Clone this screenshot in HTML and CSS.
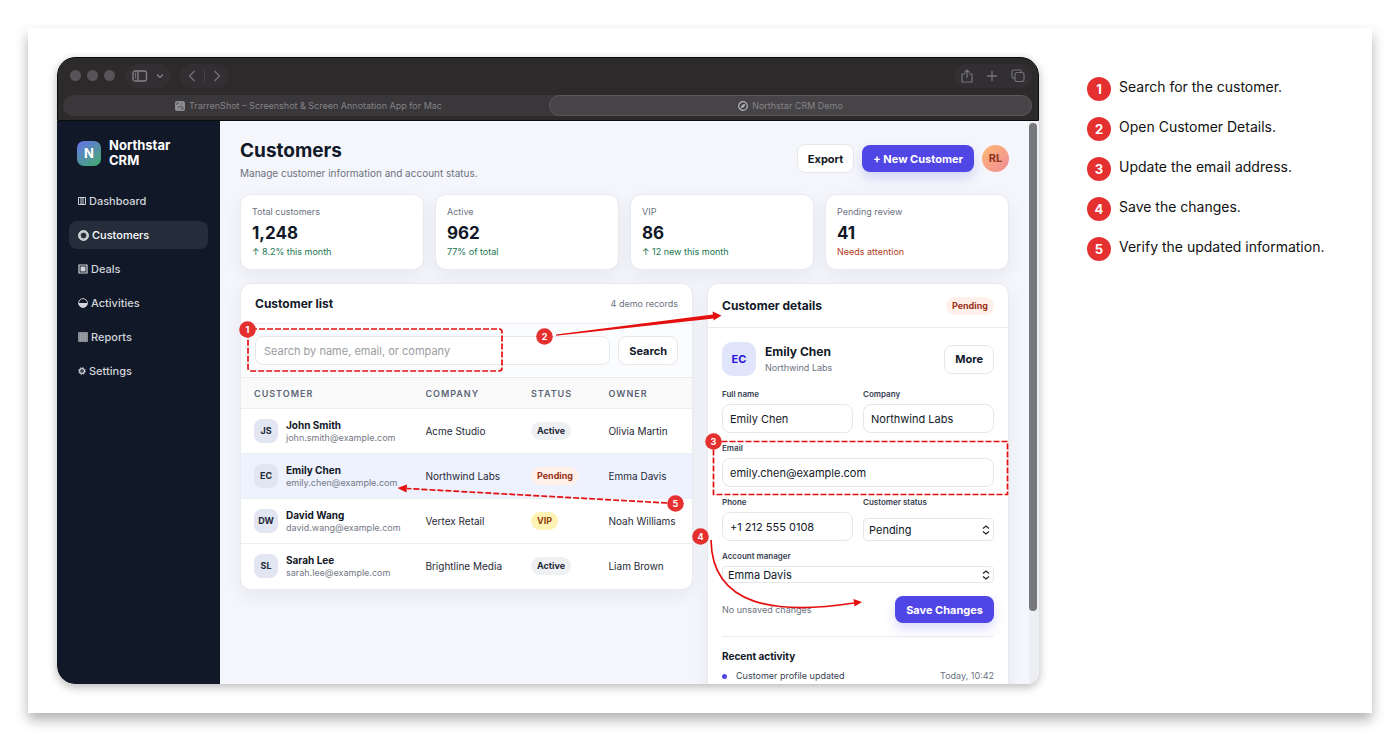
FILE: index.html
```html
<!DOCTYPE html>
<html lang="en">
<head>
  <meta charset="UTF-8">
  <title>Northstar CRM Demo</title>
  <link rel="stylesheet" href="styles.css">
</head>
<body>
  <div class="sheet">
    <div class="window">
      <!-- Browser chrome -->
      <div class="chrome">
        <div class="toolbar">
          <div class="lights"><span></span><span></span><span></span></div>
          <div class="pill">
            <svg width="16" height="12" viewBox="0 0 16 12" fill="none" stroke="#848285" stroke-width="1.3"><rect x="1" y="1" width="13.5" height="10" rx="2"/><path d="M6 1v10M3 3.5h1.2M3 5.5h1.2M3 7.5h1.2"/></svg>
            <svg width="8" height="6" viewBox="0 0 8 6" fill="none" stroke="#848285" stroke-width="1.2"><path d="M1 1.5l3 3 3-3"/></svg>
          </div>
          <div class="pill nav-pill">
            <svg width="8" height="12" viewBox="0 0 8 12" fill="none" stroke="#757376" stroke-width="1.2"><path d="M6.5 1L1.5 6l5 5"/></svg>
            <span class="pill-line"></span>
            <svg width="8" height="12" viewBox="0 0 8 12" fill="none" stroke="#757376" stroke-width="1.2"><path d="M1.5 1l5 5-5 5"/></svg>
          </div>
          <div class="pill actions-pill">
            <svg width="12" height="14" viewBox="0 0 12 14" fill="none" stroke="#757376" stroke-width="1.2"><path d="M4 5H1v8h10V5H8M6 9V1M3.5 3.5L6 1l2.500 2.500"/></svg>
            <svg width="12" height="12" viewBox="0 0 12 12" fill="none" stroke="#757376" stroke-width="1.3"><path d="M6 1v10M1 6h10"/></svg>
            <svg width="14" height="13" viewBox="0 0 14 13" fill="none" stroke="#757376" stroke-width="1.2"><rect x="4" y="3.500" width="9" height="9" rx="2"/><path d="M4 9.500H3a2 2 0 0 1-2-2V3a2 2 0 0 1 2-2h5.500a2 2 0 0 1 2 2v.5"/></svg>
          </div>
        </div>
        <div class="tabs">
          <div class="tab">
            <svg width="10" height="10" viewBox="0 0 10 10"><rect width="10" height="10" rx="2" fill="#8d8c8f"/><path d="M2 4V2h2M8 6v2H6M3 7l2-2 2 1M6 3h1" fill="none" stroke="#555357"/></svg>
            TrarrenShot – Screenshot &amp; Screen Annotation App for Mac
          </div>
          <div class="tab active">
            <svg width="10" height="10" viewBox="0 0 10 10"><circle cx="5" cy="5" r="4.300" fill="none" stroke="#b5b4b7" stroke-width="1.2"/><path d="M7.500 2.500L6 6 2.500 7.500 4 4z" fill="#b5b4b7"/></svg>
            Northstar CRM Demo
          </div>
        </div>
      </div>

      <div class="app">
        <aside class="sidebar">
          <div class="brand">
            <div class="brand-mark">N</div>
            <div>Northstar<br>CRM</div>
          </div>
          <nav>
            <a href="#"><svg width="8" height="8" viewBox="0 0 8 8" fill="none" stroke="currentColor"><path d="M.5.5h7v7h-7zM3 .5v7M5 .5v7"/></svg>Dashboard</a>
            <a href="#" class="selected"><svg width="11" height="11" viewBox="0 0 11 11" fill="none" stroke="currentColor"><circle cx="5.500" cy="5.500" r="3.900" stroke-width="2.400" stroke="#b9bdc4"/><circle cx="5.500" cy="5.500" r="4.900" stroke-width=".8"/></svg>Customers</a>
            <a href="#"><svg width="10" height="10" viewBox="0 0 10 10" fill="currentColor"><path d="M1 1h8v8H1z" fill="none" stroke="currentColor" stroke-width="1.200"/><path d="M2.500 2.500h5v5h-5z"/></svg>Deals</a>
            <a href="#"><svg width="10" height="10" viewBox="0 0 10 10" fill="currentColor"><circle cx="5" cy="5" r="4.400" fill="none" stroke="currentColor" stroke-width=".9"/><path d="M.5 5h9a4.500 4.500 0 0 1-9 0z"/></svg>Activities</a>
            <a href="#"><svg width="10" height="10" viewBox="0 0 10 10" fill="none" stroke="#aeb2b8" stroke-width=".6"><path d="M.5.5h9v9h-9z" fill="#7d828a"/><path d="M2.700.5v9M5 .5v9M7.300.5v9M.5 2.700h9M.5 5h9M.5 7.300h9"/></svg>Reports</a>
            <a href="#"><svg width="8" height="8" viewBox="0 0 8 8" fill="none" stroke="currentColor"><circle cx="4" cy="4" r="2.400" stroke-width="1.200"/><circle cx="4" cy="4" r="3.400" stroke-dasharray="1.300 1.370"/><circle cx="4" cy="4" r=".6" fill="currentColor" stroke="none"/></svg>Settings</a>
          </nav>
        </aside>

        <main>
          <header class="page-head">
            <div>
              <h1>Customers</h1>
              <p>Manage customer information and account status.</p>
            </div>
            <div class="head-actions">
              <button type="button" class="btn">Export</button>
              <button type="button" class="btn primary">+ New Customer</button>
              <div class="user">RL</div>
            </div>
          </header>

          <section class="stats">
            <div class="card stat">
              <span>Total customers</span><strong>1,248</strong><small>↑ 8.2% this month</small>
            </div>
            <div class="card stat">
              <span>Active</span><strong>962</strong><small>77% of total</small>
            </div>
            <div class="card stat">
              <span>VIP</span><strong>86</strong><small>↑ 12 new this month</small>
            </div>
            <div class="card stat">
              <span>Pending review</span><strong>41</strong><small class="warn">Needs attention</small>
            </div>
          </section>

          <div class="columns">
            <section class="card list">
              <div class="list-head">
                <h2>Customer list</h2>
                <span>4 demo records</span>
              </div>
              <form class="search">
                <input type="text" aria-label="Search customers" placeholder="Search by name, email, or company">
                <button type="button" class="btn">Search</button>
              </form>
              <table>
                <thead>
                  <tr><th class="col-customer">Customer</th><th class="col-company">Company</th><th class="col-status">Status</th><th>Owner</th></tr>
                </thead>
                <tbody>
                  <tr>
                    <td><div class="person"><div class="initials">JS</div><div><b>John Smith</b><small>john.smith@example.com</small></div></div></td>
                    <td>Acme Studio</td><td><span class="badge">Active</span></td><td>Olivia Martin</td>
                  </tr>
                  <tr class="current">
                    <td><div class="person"><div class="initials">EC</div><div><b>Emily Chen</b><small>emily.chen@example.com</small></div></div></td>
                    <td>Northwind Labs</td><td><span class="badge pending">Pending</span></td><td>Emma Davis</td>
                  </tr>
                  <tr>
                    <td><div class="person"><div class="initials">DW</div><div><b>David Wang</b><small>david.wang@example.com</small></div></div></td>
                    <td>Vertex Retail</td><td><span class="badge vip">VIP</span></td><td>Noah Williams</td>
                  </tr>
                  <tr>
                    <td><div class="person"><div class="initials">SL</div><div><b>Sarah Lee</b><small>sarah.lee@example.com</small></div></div></td>
                    <td>Brightline Media</td><td><span class="badge">Active</span></td><td>Liam Brown</td>
                  </tr>
                </tbody>
              </table>
            </section>

            <section class="card details">
              <div class="details-head">
                <h2>Customer details</h2>
                <span class="badge pending">Pending</span>
              </div>
              <div class="details-body">
                <div class="profile">
                  <div class="profile-mark">EC</div>
                  <div class="profile-name"><b>Emily Chen</b><small>Northwind Labs</small></div>
                  <button type="button" class="btn">More</button>
                </div>
                <form class="fields">
                  <div class="field">
                    <label for="fullName">Full name</label>
                    <input type="text" id="fullName" value="Emily Chen">
                  </div>
                  <div class="field">
                    <label for="company">Company</label>
                    <input type="text" id="company" value="Northwind Labs">
                  </div>
                  <div class="field wide">
                    <label for="email">Email</label>
                    <input type="email" id="email" value="emily.chen@example.com">
                  </div>
                  <div class="field">
                    <label for="phone">Phone</label>
                    <input type="text" id="phone" value="+1 212 555 0108">
                  </div>
                  <div class="field">
                    <label for="status">Customer status</label>
                    <div class="select">
                      <select id="status"><option>Pending</option><option>Active</option><option>VIP</option></select>
                      <svg width="8" height="10" viewBox="0 0 8 10" fill="none" stroke="#222" stroke-width="1.200"><path d="M1 3.500L4 1l3 2.500M1 6.500L4 9l3-2.500"/></svg>
                    </div>
                  </div>
                  <div class="field wide">
                    <label for="manager">Account manager</label>
                    <div class="select slim">
                      <select id="manager"><option>Emma Davis</option><option>Olivia Martin</option></select>
                      <svg width="8" height="10" viewBox="0 0 8 10" fill="none" stroke="#222" stroke-width="1.200"><path d="M1 3.500L4 1l3 2.500M1 6.500L4 9l3-2.500"/></svg>
                    </div>
                  </div>
                </form>
                <div class="save-row">
                  <span>No unsaved changes</span>
                  <button type="button" class="btn primary">Save Changes</button>
                </div>
                <div class="activity">
                  <h3>Recent activity</h3>
                  <div class="activity-row"><i></i><span>Customer profile updated</span><time>Today, 10:42</time></div>
                </div>
              </div>
            </section>
          </div>
        </main>
        <div class="scrollbar"><div class="thumb"></div></div>
      </div>

      <!-- Step annotations drawn over the app -->
      <svg class="marks">
        <g class="dashed">
          <rect x="191" y="272" width="254" height="42" rx="3"/>
          <rect x="656.500" y="384.500" width="294" height="53"/>
          <path d="M610 446L350 431.500"/>
        </g>
        <path class="solid" d="M499 277.500L656 257.500 655.500 254.500 664.500 258.500 656.500 263.500 656.500 261.500 499 278.800z"/>
        <path class="curve" d="M654 483C655 550 720 558 797 546"/>
        <path class="solid" d="M805 545l-8.500-3 1 7.500z"/>
        <path class="solid" d="M340.500 431l9.500-3.500-.5 8z"/>
        <g class="nums">
          <circle cx="190.500" cy="272.500" r="8.300"/><text x="190.500" y="276">1</text>
          <circle cx="487.500" cy="279.500" r="8.300"/><text x="487.500" y="283">2</text>
          <circle cx="656.500" cy="384.500" r="8.300"/><text x="656.500" y="388">3</text>
          <circle cx="643.500" cy="479.500" r="8.300"/><text x="643.500" y="483">4</text>
          <circle cx="618.500" cy="446.500" r="8.300"/><text x="618.500" y="450">5</text>
        </g>
      </svg>
    </div>

    <ol class="steps">
      <li><span>1</span>Search for the customer.</li>
      <li><span>2</span>Open Customer Details.</li>
      <li><span>3</span>Update the email address.</li>
      <li><span>4</span>Save the changes.</li>
      <li><span>5</span>Verify the updated information.</li>
    </ol>
  </div>
</body>
</html>
```
FILE: styles.css
```css
* {
  box-sizing: border-box;
}
body {
  margin: 0;
  height: 100vh;
  padding: 28px;
  background: #fff;
  font-family: Inter, "Liberation Sans", sans-serif;
  color: #111827;
}
h1, h2, h3, p {
  margin: 0;
}
button, input, select {
  font-family: inherit;
  color: inherit;
}
.sheet {
  height: 100%;
  padding: 29px;
  display: flex;
  gap: 48px;
  background: #fff;
  box-shadow: 0 7px 12px rgba(0,0,0,0.3);
}
.window {
  position: relative;
  flex: 1;
  min-width: 0;
  display: flex;
  flex-direction: column;
  overflow: hidden;
  border-radius: 18px 18px 12px 18px;
  box-shadow: 0 3px 10px rgba(0,0,0,0.28);
}

/* browser chrome */
.chrome {
  background: #2c2a2b;
  border: 1px solid #0c0c0c;
  border-radius: 18px 18px 0 0;
  padding: 5px 6px 4px 5px;
}
.toolbar {
  display: flex;
  align-items: center;
  height: 25px;
  margin-bottom: 7px;
  padding-left: 7px;
}
.lights {
  display: flex;
  gap: 6px;
  margin-right: 10px;
}
.lights span {
  width: 11px;
  height: 11px;
  border-radius: 50%;
  background: #565456;
}
.pill {
  display: flex;
  align-items: center;
  gap: 8px;
  height: 24px;
  padding: 0 7px;
  margin-right: 9px;
  border-radius: 12px;
  background: #312f31;
}
.nav-pill {
  padding: 0 8px;
}
.pill-line {
  width: 1px;
  height: 14px;
  background: #454345;
}
.actions-pill {
  gap: 13px;
  margin-left: auto;
  margin-right: 0;
}
.tabs {
  display: flex;
  height: 21px;
  padding-left: 5px;
  border-radius: 11px;
  background: #39373a;
}
.tab {
  flex: 1;
  display: flex;
  align-items: center;
  justify-content: center;
  gap: 4px;
  font-size: 9px;
  color: #858387;
}
.tab.active {
  border: 1px solid #5b595c;
  border-radius: 11px;
  background: #464447;
}

.app {
  flex: 1;
  min-height: 0;
  display: flex;
  background: #f5f6fb;
}

/* sidebar */
.sidebar {
  width: 163px;
  flex-shrink: 0;
  padding: 17px 12px;
  background: #111827;
  border-radius: 0 0 0 18px;
}
.brand {
  display: flex;
  align-items: center;
  gap: 8px;
  padding: 0 8px;
  margin-bottom: 19px;
  color: #fff;
  font-size: 13px;
  font-weight: 700;
  line-height: 15px;
}
.brand-mark {
  width: 24px;
  height: 25px;
  line-height: 25px;
  text-align: center;
  border-radius: 7px;
  background: linear-gradient(145deg, #6672ee, #42ad69);
}
nav {
  display: flex;
  flex-direction: column;
  gap: 6px;
}
nav a {
  display: flex;
  align-items: center;
  gap: 3px;
  height: 28px;
  padding: 0 9px;
  border-radius: 8px;
  color: #d1d5db;
  font-size: 11px;
  font-weight: 500;
  text-decoration: none;
}
nav a.selected {
  background: #262d3a;
  color: #fff;
}

/* main */
main {
  flex: 1;
  min-width: 0;
  padding: 18px 20px 0;
  overflow: hidden;
}
.page-head {
  display: flex;
  justify-content: space-between;
  align-items: flex-start;
  margin-bottom: 14px;
}
h1 {
  font-size: 19px;
  line-height: 24px;
}
.page-head p {
  margin-top: 3px;
  font-size: 10px;
  line-height: 14px;
  color: #6b7280;
}
.head-actions {
  display: flex;
  align-items: center;
  gap: 8px;
  height: 39px;
}
.btn {
  height: 29px;
  padding: 0 10px;
  border: 1px solid #e5e7eb;
  border-radius: 8px;
  background: #fff;
  font-size: 11px;
  font-weight: 700;
  cursor: pointer;
}
.btn.primary {
  height: 27px;
  padding: 0 11px;
  border: none;
  background: #4f46e5;
  color: #fff;
  box-shadow: 0 6px 12px rgba(79,70,229,0.2);
}
.user {
  width: 27px;
  height: 27px;
  line-height: 27px;
  border-radius: 50%;
  text-align: center;
  font-size: 11px;
  font-weight: 700;
  color: #8f3323;
  background: linear-gradient(135deg, #fdba74, #f08a96);
}
.card {
  background: #fff;
  border: 1px solid #e8eaf0;
  border-radius: 11px;
  box-shadow: 0 6px 18px rgba(17,24,39,0.06);
}
.stats {
  display: grid;
  grid-template-columns: repeat(4, 1fr);
  gap: 11px;
  margin-bottom: 13px;
}
.stat {
  display: flex;
  flex-direction: column;
  padding: 11px;
}
.stat span {
  font-size: 9px;
  line-height: 12px;
  color: #6b7280;
}
.stat strong {
  margin: 4px 0 2px;
  font-size: 17px;
  line-height: 22px;
}
.stat small {
  font-size: 9px;
  line-height: 12px;
  color: #17754f;
}
.stat .warn {
  color: #b23a1c;
}
.columns {
  display: grid;
  grid-template-columns: 3fr 2fr;
  gap: 14px;
  align-items: start;
}
h2 {
  font-size: 12px;
  line-height: 16px;
}

/* customer list */
.list {
  overflow: hidden;
}
.list-head {
  display: flex;
  justify-content: space-between;
  align-items: center;
  height: 40px;
  padding: 0 14px;
  border-bottom: 1px solid #edeff4;
}
.list-head span {
  font-size: 9px;
  color: #6b7280;
}
.search {
  display: flex;
  gap: 8px;
  padding: 12px 14px;
  background: #fbfcfe;
}
.search input, .field input {
  width: 100%;
  min-width: 0;
  height: 29px;
  padding: 0 8px;
  border: 1px solid #e5e7eb;
  border-radius: 8px;
  background: #fff;
  font-size: 11px;
}
.field input {
  padding: 0 7px;
}
.search input::placeholder {
  color: #9a9ca1;
}
table {
  width: 100%;
  table-layout: fixed;
  border-collapse: collapse;
}
.col-customer {
  width: 38%;
}
.col-company {
  width: 23.4%;
}
.col-status {
  width: 17.2%;
}
th {
  height: 31px;
  padding: 0 0 0 13px;
  border-top: 1px solid #e9ebf0;
  background: #fafafb;
  text-align: left;
  text-transform: uppercase;
  letter-spacing: 1px;
  font-size: 9px;
  font-weight: 600;
  color: #5b6574;
}
td {
  height: 45px;
  padding: 0 0 0 13px;
  border-top: 1px solid #edeff4;
  font-size: 10px;
  color: #1f2937;
}
.current {
  background: #eef1fe;
}
.person {
  display: flex;
  align-items: center;
  gap: 8px;
}
.person b, .person small {
  display: block;
  line-height: 13px;
}
.person b {
  color: #111827;
}
.person small {
  font-size: 9px;
  line-height: 12px;
  color: #737985;
}
.initials {
  width: 24px;
  height: 24px;
  line-height: 24px;
  border-radius: 8px;
  background: #e2e5f2;
  text-align: center;
  font-size: 9px;
  font-weight: 700;
}
.badge {
  display: inline-block;
  padding: 0 6px;
  border-radius: 9px;
  background: #eef0f4;
  font-size: 9px;
  line-height: 18px;
  font-weight: 700;
}
.badge.pending {
  background: #fff1ea;
  color: #9a2f16;
}
.badge.vip {
  background: #fef3b4;
  color: #92400e;
}

/* customer details */
.details-head {
  display: flex;
  justify-content: space-between;
  align-items: center;
  height: 44px;
  padding: 0 14px;
  border-bottom: 1px solid #e9ebf0;
}
.details-body {
  padding: 14px;
}
.profile {
  display: flex;
  align-items: center;
  gap: 9px;
  margin-bottom: 13px;
}
.profile-mark {
  width: 34px;
  height: 34px;
  line-height: 34px;
  border-radius: 10px;
  background: #e0e5fb;
  color: #2b12dc;
  text-align: center;
  font-size: 11px;
  font-weight: 700;
}
.profile-name {
  flex: 1;
}
.profile-name b, .profile-name small {
  display: block;
}
.profile-name b {
  font-size: 12px;
  line-height: 17px;
}
.profile-name small {
  font-size: 9px;
  line-height: 15px;
  color: #6b7280;
}
.fields {
  display: grid;
  grid-template-columns: 1fr 1fr;
  gap: 10px;
}
.field {
  display: flex;
  flex-direction: column;
  justify-content: space-between;
  gap: 4px;
}
.wide {
  grid-column: span 2;
}
.field label {
  font-size: 8px;
  line-height: 11px;
  font-weight: 600;
  color: #374151;
}
.select {
  position: relative;
}
.select select {
  display: block;
  width: 100%;
  height: 23px;
  padding: 0 5px;
  border: 1px solid #e5e7eb;
  border-radius: 4px;
  background: #fff;
  font-size: 11px;
  appearance: none;
}
.select.slim select {
  height: 17px;
}
.select svg {
  position: absolute;
  right: 4px;
  top: 50%;
  transform: translateY(-50%);
  pointer-events: none;
}
.save-row {
  display: flex;
  align-items: center;
  justify-content: space-between;
  margin: 13px 0;
  font-size: 9px;
  color: #6b7280;
}
.activity {
  padding-top: 12px;
  border-top: 1px solid #e9ebf0;
}
h3 {
  font-size: 10px;
  line-height: 14px;
}
.activity-row {
  display: flex;
  align-items: center;
  gap: 9px;
  margin-top: 7px;
  font-size: 9px;
  line-height: 12px;
  color: #374151;
}
.activity-row i {
  width: 5px;
  height: 5px;
  border-radius: 50%;
  background: #4f46e5;
}
.activity-row time {
  margin-left: auto;
  color: #6b7280;
}
.scrollbar {
  width: 10px;
  padding: 2px 2px 0 0;
  background: #eceef2;
}
.thumb {
  width: 8px;
  height: 87%;
  border-radius: 4px;
  background: #77787b;
}

/* annotations */
.marks {
  position: absolute;
  inset: 0;
  width: 100%;
  height: 100%;
  pointer-events: none;
}
.dashed {
  fill: none;
  stroke: #e60f0f;
  stroke-width: 1.7;
  stroke-dasharray: 6 2;
}
.solid {
  fill: #e60f0f;
}
.curve {
  fill: none;
  stroke: #e60f0f;
  stroke-width: 1.7;
}
.nums circle {
  fill: #e53030;
}
.nums text {
  fill: #fff;
  font-size: 9px;
  font-weight: 700;
  text-anchor: middle;
}
.steps {
  width: 256px;
  flex-shrink: 0;
  margin: 0;
  padding: 20px 0 0;
  list-style: none;
}
.steps li {
  display: flex;
  gap: 8px;
  height: 40px;
  font-size: 14px;
  line-height: 20px;
  color: #111;
}
.steps span {
  width: 24px;
  height: 24px;
  line-height: 24px;
  border-radius: 50%;
  background: #e53030;
  color: #fff;
  text-align: center;
  font-size: 13px;
  font-weight: 700;
}
```
